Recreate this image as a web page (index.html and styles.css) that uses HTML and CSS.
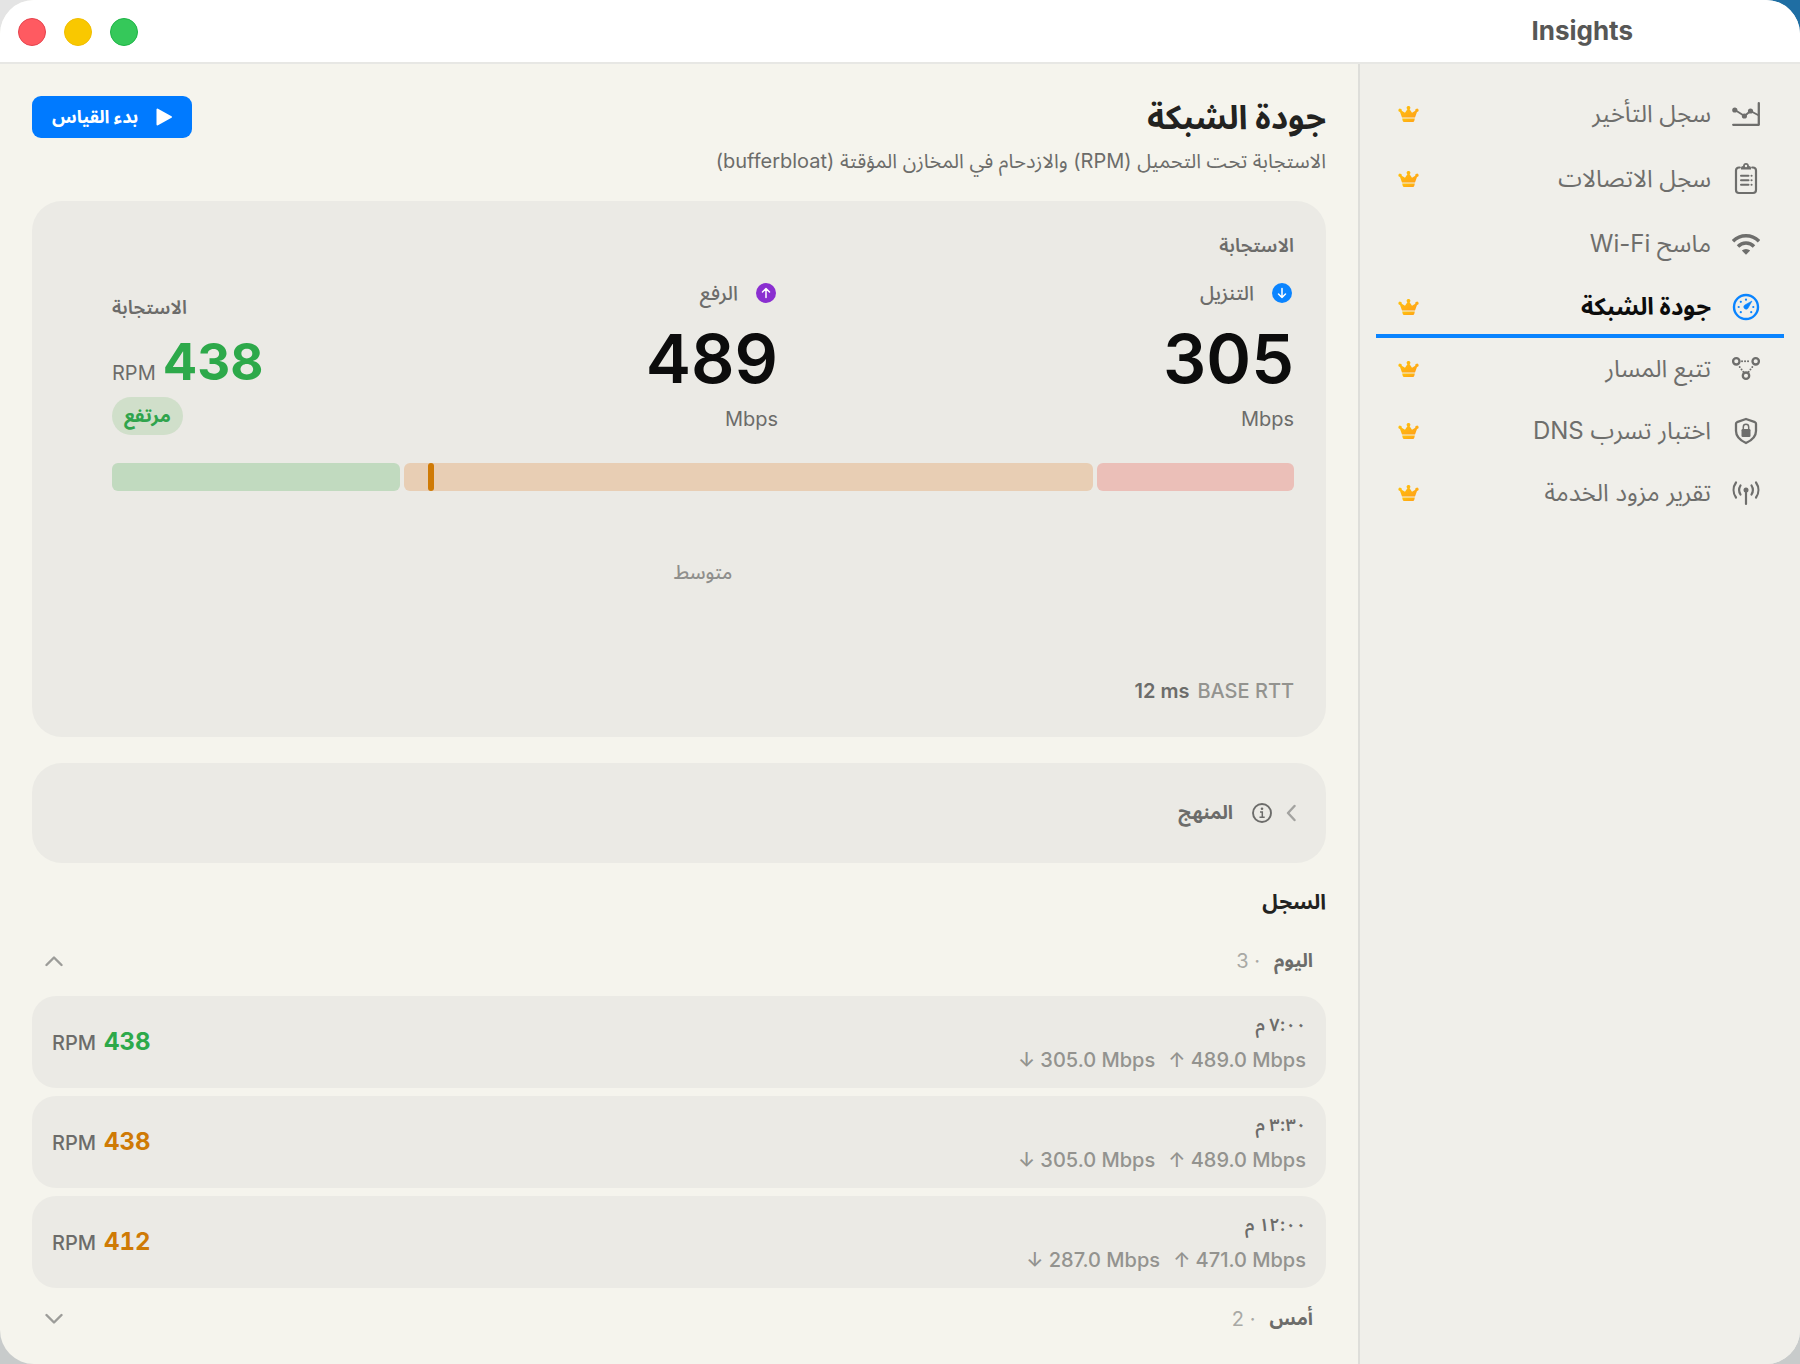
FILE: index.html
```html
<!DOCTYPE html>
<html lang="ar" dir="rtl">
<head>
<meta charset="utf-8">
<title>Insights</title>
<link rel="stylesheet" href="styles.css">
</head>
<body>
<svg class="defs" aria-hidden="true">
  <linearGradient id="gold" x1="0" y1="0" x2="1" y2="1"><stop offset="0" stop-color="#ffc60a"/><stop offset="1" stop-color="#ff9f1a"/></linearGradient>
  <symbol id="crown" viewBox="0 0 21 16">
    <path fill="url(#gold)" d="M4 11.4 2 6a1.7 1.7 0 1 1 1.7-1.2L7 6.8 9.4 3.2a1.8 1.8 0 1 1 2.2 0L14 6.8l3.300-2A1.700 1.700 0 1 1 19 6l-2 5.400z"/>
    <path fill="url(#gold)" d="M4.200 12.600h12.600l-.4 1.900q-.3 1.500-1.700 1.500H6.300q-1.400 0-1.700-1.500z"/>
  </symbol>
</svg>
<div class="window">
  <header class="titlebar">
    <h1 class="window-title">Insights</h1>
    <div class="lights">
      <button class="light light-close" aria-label="إغلاق"></button>
      <button class="light light-min" aria-label="تصغير"></button>
      <button class="light light-max" aria-label="تكبير"></button>
    </div>
  </header>
  <div class="body">
    <nav class="sidebar">
      <a class="nav-item" href="#latency">
        <svg class="nav-icon" width="28" height="32" viewBox="0 -4 28 32" fill="none" stroke="currentColor" stroke-width="2.300" stroke-linecap="round" stroke-linejoin="round"><path d="M1.200 22.800h25.600V1.200"/><path d="M3 8l9.500 6 6-5L26 13" stroke-width="1.900"/><g fill="currentColor" stroke="none"><circle cx="2.800" cy="8" r="2.600"/><circle cx="12.400" cy="14" r="2.600"/><circle cx="18.500" cy="9" r="2.600"/></g></svg>
        <span class="nav-label">سجل التأخير</span><svg class="crown" width="21" height="16"><use href="#crown"/></svg>
      </a>
      <a class="nav-item" href="#connections">
        <svg class="nav-icon" width="28" height="34" viewBox="-3 -1 28 34" fill="none" stroke="currentColor" stroke-width="2.200" stroke-linecap="round"><path d="M4.800 4.500H4a3 3 0 0 0-3 3V27a3 3 0 0 0 3 3h14a3 3 0 0 0 3-3V7.500a3 3 0 0 0-3-3h-.8"/><path d="M6 6.500V4.800Q6 3 8 3q.3-3 3-3t3 3q2 0 2 1.800v1.700z" fill="currentColor" stroke="none"/><circle cx="11" cy="3" r="1.200" fill="#f0efea" stroke="none"/><path d="M6 12.800h7.500M6 17.300h7.500M6 21.800h7.500M16.500 12.800h.1M16.500 17.300h.1M16.500 21.800h.1" stroke-width="2"/></svg>
        <span class="nav-label">سجل الاتصالات</span><svg class="crown" width="21" height="16"><use href="#crown"/></svg>
      </a>
      <a class="nav-item" href="#wifi">
        <svg class="nav-icon" width="28" height="32" viewBox="0 -5 28 32" fill="none" stroke="currentColor" stroke-width="3.500" stroke-linecap="butt"><path d="M1 8.200a18.500 18.500 0 0 1 26 0"/><path d="M6 13.400a11.400 11.400 0 0 1 16 0"/><path d="M14 21.800l-4.200-4.200a6 6 0 0 1 8.400 0z" fill="currentColor" stroke="none"/></svg>
        <span class="nav-label">ماسح Wi-Fi</span>
      </a>
      <a class="nav-item nav-item-active" href="#quality" aria-current="page">
        <svg class="nav-icon" width="28" height="30" viewBox="-14 -15 28 30"><circle r="12" fill="none" stroke="currentColor" stroke-width="2.400"/><path d="M6-6 1.800 1.500A2.300 2.300 0 1 1-1.500-1.800z" fill="currentColor" stroke="currentColor" stroke-width=".6" stroke-linejoin="round"/><g fill="currentColor"><circle cx="0" cy="-7.300" r="1.100"/><circle cx="-5.200" cy="-5.200" r="1.100"/><circle cx="-7.300" cy="0" r="1.100"/><circle cx="-5.200" cy="5.200" r="1.100"/><circle cx="7.300" cy="0" r="1.100"/><circle cx="5.200" cy="5.200" r="1.100"/></g></svg>
        <span class="nav-label">جودة الشبكة</span><svg class="crown" width="21" height="16"><use href="#crown"/></svg>
      </a>
      <a class="nav-item" href="#trace">
        <svg class="nav-icon" width="28" height="30" viewBox="0 -3 28 30" fill="none" stroke="currentColor" stroke-width="2.300"><circle cx="4.300" cy="4.300" r="3.200"/><circle cx="23.700" cy="4.300" r="3.200"/><circle cx="14" cy="18.700" r="3.200"/><path d="M10 4.300h9M7.700 10l3.800 5M20.300 10l-3.800 5" stroke-width="1.900" stroke-linecap="round" stroke-dasharray=".1 2.900"/></svg>
        <span class="nav-label">تتبع المسار</span><svg class="crown" width="21" height="16"><use href="#crown"/></svg>
      </a>
      <a class="nav-item" href="#dns">
        <svg class="nav-icon" width="28" height="30" viewBox="-3 -2 28 30" fill="none" stroke="currentColor" stroke-width="2.300" stroke-linejoin="round"><path d="M11 1l9 3.200q1 .4 1 1.500V13q0 7.500-10 12Q1 20.500 1 13V5.700q0-1.100 1-1.500z"/><rect x="6.500" y="11" width="9" height="8" rx="1.200" fill="currentColor" stroke="none"/><path d="M8.300 11.500V9a2.700 2.700 0 0 1 5.400 0v2.500" stroke-width="1.500"/></svg>
        <span class="nav-label">اختبار تسرب DNS</span><svg class="crown" width="21" height="16"><use href="#crown"/></svg>
      </a>
      <a class="nav-item" href="#isp">
        <svg class="nav-icon" width="28" height="30" viewBox="0 -3 28 30" fill="none" stroke="currentColor" stroke-width="2.200" stroke-linecap="round"><path d="M14 9v14M4 1.500a13 13 0 0 0 0 15M24 1.500a13 13 0 0 1 0 15M8.500 4.500a8.500 8.500 0 0 0 0 9M19.500 4.500a8.500 8.500 0 0 1 0 9"/><circle cx="14" cy="9" r="2.500" fill="currentColor" stroke="none"/></svg>
        <span class="nav-label">تقرير مزود الخدمة</span><svg class="crown" width="21" height="16"><use href="#crown"/></svg>
      </a>
    </nav>
    <main class="content">
      <div class="page-head">
        <div>
          <h2 class="page-title">جودة الشبكة</h2>
          <p class="page-sub">الاستجابة تحت التحميل (RPM) والازدحام في المخازن المؤقتة (bufferbloat)</p>
        </div>
        <button class="start"><svg width="16" height="18" viewBox="0 0 16 18"><path d="M1.500 1.500v15L15 9z" fill="#fff" stroke="#fff" stroke-width="2" stroke-linejoin="round"/></svg>بدء القياس</button>
      </div>

      <section class="card result">
        <h3 class="caption">الاستجابة</h3>
        <div class="metrics">
          <div class="metric">
            <div class="metric-name"><svg class="dot" width="20" height="20" viewBox="0 0 20 20"><circle cx="10" cy="10" r="10" fill="#0a84ff"/><path d="M10 5.500v9M6.500 11l3.500 3.500 3.500-3.500" fill="none" stroke="#fff" stroke-width="1.500" stroke-linecap="round" stroke-linejoin="round"/></svg>التنزيل</div>
            <div class="metric-value">305</div>
            <div class="metric-unit">Mbps</div>
          </div>
          <div class="metric">
            <div class="metric-name"><svg class="dot" width="20" height="20" viewBox="0 0 20 20"><circle cx="10" cy="10" r="10" fill="#8a2fd0"/><path d="M10 14.500v-9M6.500 9L10 5.500 13.500 9" fill="none" stroke="#fff" stroke-width="1.500" stroke-linecap="round" stroke-linejoin="round"/></svg>الرفع</div>
            <div class="metric-value">489</div>
            <div class="metric-unit">Mbps</div>
          </div>
          <div class="score">
            <div class="caption">الاستجابة</div>
            <div class="score-line" dir="ltr"><span class="unit">RPM</span><span class="score-value">438</span></div>
            <span class="pill">مرتفع</span>
          </div>
        </div>
        <div class="scale">
          <div class="zone zone-low"></div>
          <div class="zone zone-mid"><span class="marker" style="left: 3.500%"></span></div>
          <div class="zone zone-high"></div>
        </div>
        <p class="zone-label">متوسط</p>
        <div class="rtt"><span class="rtt-name">BASE RTT</span><span class="rtt-value" dir="ltr">12 ms</span></div>
      </section>

      <button class="card method" aria-expanded="false">
        <svg width="10" height="18" viewBox="0 0 10 18"><path d="M8.500 2 2 9l6.500 7" fill="none" stroke="#a3a3a0" stroke-width="2.400" stroke-linecap="round" stroke-linejoin="round"/></svg>
        <svg class="info" width="20" height="20" viewBox="0 0 20 20" fill="none" stroke="currentColor" stroke-width="1.900"><circle cx="10" cy="10" r="9"/><path d="M8 9h2.300v5M7.500 14.200h5.200" stroke-width="1.500"/><circle cx="10" cy="5.800" r="1.300" fill="currentColor" stroke="none"/></svg>
        <span>المنهج</span>
      </button>

      <h3 class="history-title">السجل</h3>
      <button class="group" aria-expanded="true"><span class="group-name">اليوم</span><span class="group-count">· 3</span><svg class="chevron" width="18" height="12" viewBox="0 0 18 12"><path d="M1.500 10 9 2.500l7.500 7.500" fill="none" stroke="#9c9c99" stroke-width="2.400" stroke-linecap="round" stroke-linejoin="round"/></svg></button>
      <ul class="runs">
        <li class="run">
          <div><div class="run-time">٧:٠٠ م</div><div class="run-rates" dir="ltr"><span>↓ 305.0 Mbps</span><span>↑ 489.0 Mbps</span></div></div>
          <div class="run-score" dir="ltr"><span class="run-unit">RPM</span><span class="run-value good">438</span></div>
        </li>
        <li class="run">
          <div><div class="run-time">٣:٣٠ م</div><div class="run-rates" dir="ltr"><span>↓ 305.0 Mbps</span><span>↑ 489.0 Mbps</span></div></div>
          <div class="run-score" dir="ltr"><span class="run-unit">RPM</span><span class="run-value fair">438</span></div>
        </li>
        <li class="run">
          <div><div class="run-time">١٢:٠٠ م</div><div class="run-rates" dir="ltr"><span>↓ 287.0 Mbps</span><span>↑ 471.0 Mbps</span></div></div>
          <div class="run-score" dir="ltr"><span class="run-unit">RPM</span><span class="run-value fair">412</span></div>
        </li>
      </ul>
      <button class="group" aria-expanded="false"><span class="group-name">أمس</span><span class="group-count">· 2</span><svg class="chevron" width="18" height="12" viewBox="0 0 18 12"><path d="M1.500 2 9 9.500 16.500 2" fill="none" stroke="#9c9c99" stroke-width="2.400" stroke-linecap="round" stroke-linejoin="round"/></svg></button>
    </main>
  </div>
</div>
</body>
</html>
```
FILE: styles.css
```css
* { box-sizing: border-box; }
body {
  margin: 0;
  min-height: 100vh;
  background: linear-gradient(to left, #1f6ea3 0, #1f6ea3 40px, #e4e4e4 80px) top / 100% 60px no-repeat, #c8cbcb;
  font-family: Inter, "Noto Sans Arabic", "DejaVu Sans", sans-serif;
  font-size: 20px;
  line-height: 28px;
  color: #6c6c6a;
}
h1, h2, h3, p, ul { margin: 0; padding: 0; }
button {
  border: 0;
  padding: 0;
  background: none;
  font: inherit;
  color: inherit;
}
.defs { position: absolute; width: 0; height: 0; }

.window {
  min-height: 100vh;
  display: flex;
  flex-direction: column;
  border-radius: 34px;
  overflow: hidden;
  background: #f5f4ed;
}
.titlebar {
  height: 64px;
  display: flex;
  align-items: center;
  justify-content: space-between;
  background: #fff;
  border-bottom: 2px solid #e7e7e4;
  padding-inline: 167px 18px;
}
.window-title { font-size: 26px; line-height: 32px; font-weight: 700; color: #575756; }
.lights { display: flex; flex-direction: row-reverse; gap: 18px; margin-top: 2px; }
.light { width: 28px; height: 28px; border-radius: 50%; border: 1px solid; }
.light-close { background: #ff5a61; border-color: #e5434d; }
.light-min { background: #f9c800; border-color: #f0bd00; }
.light-max { background: #35c85a; border-color: #1db446; }

.body { flex: 1; display: flex; }
.sidebar {
  width: 442px;
  flex: none;
  background: #f0efea;
  border-inline-end: 2px solid #dededa;
  padding: 18px 16px;
}
.nav-item {
  display: flex;
  align-items: center;
  padding: 16px 24px 16px 22px;
  font-size: 24px;
  line-height: 30px;
  color: #6e6e6c;
  text-decoration: none;
}
.nav-label { flex: 1; margin-inline-start: 21px; }
.nav-item-active { color: #0a84ff; font-weight: 700; border-bottom: 4px solid #0a84ff; padding-block: 16px 12px; }
.nav-item-active .nav-label { color: #0c0c0c; }
.nav-icon, .crown { flex: none; }

.content { flex: 1; min-width: 0; padding: 32px 32px 8px; }
.page-head { display: flex; justify-content: space-between; align-items: flex-start; margin-bottom: 23px; }
.page-title { font-size: 33px; line-height: 42px; font-weight: 700; color: #222220; }
.page-sub { margin-top: 6px; line-height: 34px; }
.start {
  height: 42px;
  padding: 0 20px;
  display: flex;
  align-items: center;
  gap: 18px;
  border-radius: 9px;
  background: #007aff;
  color: #fff;
  font-size: 18px;
  font-weight: 700;
}

.card { background: #ebeae5; border-radius: 30px; }
.result { padding: 31px 32px 32px; margin-bottom: 26px; }
.caption { font-size: 19px; line-height: 28px; font-weight: 600; }
.metrics { display: grid; grid-template-columns: 1fr 1fr 150px; margin-top: 19px; margin-inline-end: 48px; }
.metric-name { display: flex; align-items: center; gap: 18px; line-height: 28px; font-weight: 500; }
.dot { margin-inline-start: 2px; }
.metric-value { font-size: 68px; line-height: 84px; margin-top: 9px; font-weight: 600; color: #0c0c0c; }
.metric-unit { line-height: 28px; margin-top: 5px; }
.score { display: flex; flex-direction: column; align-items: flex-end; padding-top: 15px; }
.score-line { display: flex; align-items: baseline; gap: 7px; line-height: 48px; width: 150px; margin-top: 16px; }
.score-value { font-size: 51px; font-weight: 700; color: #2da94a; }
.pill {
  font-size: 19px;
  line-height: 38px;
  padding: 0 12px;
  border-radius: 19px;
  background: #d0dfca;
  color: #2fa44c;
  font-weight: 700;
}
.scale { display: flex; gap: 4px; height: 28px; margin-top: 28px; margin-inline-end: 48px; }
.zone { border-radius: 6px; }
.zone-low { flex: 197; background: #ebbfb8; }
.zone-mid { flex: 689; background: #e8ceb4; position: relative; }
.zone-high { flex: 288; background: #c1dabf; }
.marker { position: absolute; top: 0; bottom: 0; width: 6px; border-radius: 3px; background: #cf7a05; }
.zone-label { margin-top: 68px; margin-inline-end: 48px; text-align: center; font-size: 19px; font-weight: 500; color: #8f8f8c; }
.rtt { display: flex; gap: 8px; margin-top: 90px; font-weight: 500; }
.rtt-name { color: #93938f; }
.rtt-value { font-weight: 600; }

.method {
  width: 100%;
  height: 100px;
  padding: 0 30px;
  display: flex;
  align-items: center;
  font-size: 19px;
  font-weight: 700;
}
.info { margin-inline: 14px 19px; }

.history-title { margin-top: 22px; line-height: 34px; font-size: 21px; font-weight: 700; color: #222220; }
.group {
  width: 100%;
  height: 60px;
  margin-top: 12px;
  padding: 0 13px;
  display: flex;
  align-items: center;
}
.group-name { font-size: 19px; font-weight: 700; }
.group-count { margin-inline-start: 14px; color: #a9a9a5; }
.chevron { margin-inline-start: auto; }
.runs { list-style: none; display: flex; flex-direction: column; gap: 8px; margin-top: 5px; }
.runs + .group { margin-top: 1px; }
.run {
  display: flex;
  align-items: center;
  justify-content: space-between;
  min-height: 92px;
  padding: 10px 20px;
  border-radius: 24px;
  background: #ebeae5;
}
.run-time { font-size: 18px; line-height: 36px; font-weight: 600; }
.run-rates { display: flex; gap: 13px; line-height: 34px; font-weight: 500; color: #93938f; }
.run-score { display: flex; align-items: baseline; gap: 8px; }
.run-unit { font-weight: 500; }
.run-value { font-size: 24px; font-weight: 700; font-variant-numeric: tabular-nums; }
.good { color: #2da94a; }
.fair { color: #cf7a05; }
```
